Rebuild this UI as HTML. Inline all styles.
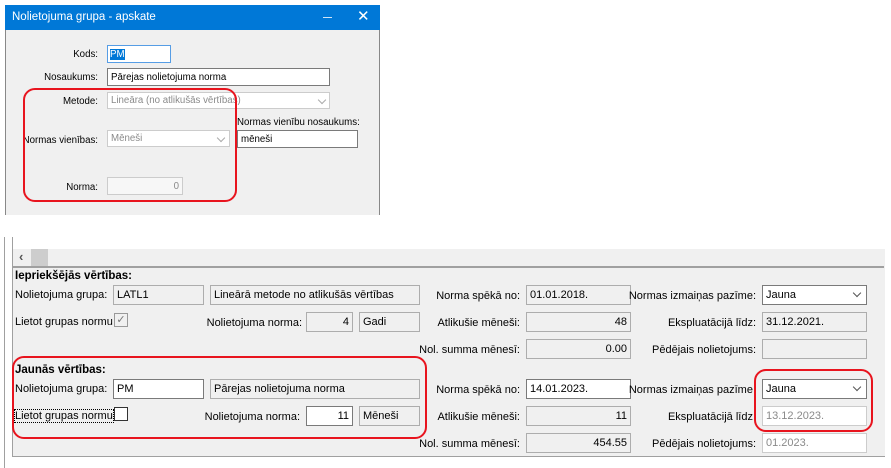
<!DOCTYPE html>
<html><head><meta charset="utf-8"><style>
*{box-sizing:border-box;margin:0;padding:0}
body{width:891px;height:468px;background:#fff;position:relative;overflow:hidden;font-family:"Liberation Sans",sans-serif;font-size:11px;color:#000}
.a{position:absolute;white-space:nowrap}
.lbl{position:absolute;white-space:nowrap;text-align:right;line-height:14px}
.in{position:absolute;background:#fff;border:1px solid #7a7a7a;line-height:19px;padding:0 3px;white-space:nowrap;overflow:hidden}
.ro{background:#f0f0f0;border:1px solid #adadad}
.dis{background:#fff;border:1px solid #ccc;color:#8a8a8a}
.r{text-align:right}
.red{position:absolute;border:2px solid #e8141e;border-radius:12px}
.chev{position:absolute;width:6px;height:6px;border-right:1px solid #555;border-bottom:1px solid #555;transform:rotate(45deg)}
.d{font-size:9.7px}
.d.in{line-height:17px}
</style></head><body>
<!-- dialog -->
<div class="a" style="left:5px;top:5px;width:375px;height:210px;background:#f0f0f0;border-left:1px solid #888;border-right:1px solid #888"></div>
<div class="a" style="left:5px;top:5px;width:375px;height:25px;background:#0078d7;color:#fff;font-size:11.5px;line-height:25px;padding-left:7px">Nolietojuma grupa - apskate</div>
<div class="a" style="left:323px;top:17px;width:9px;height:1px;background:#cfe4f7"></div>
<div class="a" style="left:357px;top:8px;color:#fff;font-size:15px;line-height:18px">✕</div>
<div class="lbl d" style="right:793px;top:48px">Kods:</div>
<div class="in d" style="left:107px;top:45px;width:64px;height:18px;border-color:#569de5;padding-left:2px"><span style="background:#0078d7;color:#fff">PM</span></div>
<div class="lbl d" style="right:793px;top:71px">Nosaukums:</div>
<div class="in d" style="left:107px;top:68px;width:223px;height:18px">Pārejas nolietojuma norma</div>
<div class="lbl d" style="right:793px;top:95px">Metode:</div>
<div class="in dis d" style="left:107px;top:92px;width:223px;height:17px;line-height:16px">Lineāra (no atlikušās vērtības)</div>
<div class="chev" style="left:319px;top:97px;border-color:#aaa"></div>
<div class="a d" style="left:237px;top:117px">Normas vienību nosaukums:</div>
<div class="in d" style="left:237px;top:130px;width:121px;height:18px">mēneši</div>
<div class="lbl d" style="right:793px;top:134px">Normas vienības:</div>
<div class="in dis d" style="left:107px;top:130px;width:123px;height:17px;line-height:16px">Mēneši</div>
<div class="chev" style="left:218px;top:135px;border-color:#aaa"></div>
<div class="lbl d" style="right:793px;top:181px">Norma:</div>
<div class="in dis d r" style="left:107px;top:177px;width:76px;height:18px;background:#f7f7f7">0</div>
<div class="red" style="left:23px;top:88px;width:214px;height:114px"></div>

<!-- bottom panel -->
<div class="a" style="left:4px;top:237px;width:1px;height:231px;background:#a0a0a0"></div>
<div class="a" style="left:12px;top:237px;width:873px;height:220px;background:#f0f0f0;border-left:1px solid #a0a0a0;border-bottom:1px solid #a0a0a0"></div>
<div class="a" style="left:13px;top:237px;width:872px;height:12px;background:#fff"></div>
<div class="a" style="left:13px;top:249px;width:871px;height:17px;background:#f0f0f0"></div>
<div class="a" style="left:19px;top:249px;font-size:13px;font-weight:bold;color:#555">‹</div>
<div class="a" style="left:31px;top:249px;width:17px;height:17px;background:#cdcdcd"></div>
<div class="a" style="left:13px;top:266px;width:871px;height:2px;background:#a0a0a0"></div>

<div class="a" style="left:15px;top:270px;font-weight:bold;font-size:11.5px">Iepriekšējās vērtības:</div>
<div class="a" style="left:15px;top:289px">Nolietojuma grupa:</div>
<div class="in ro" style="left:113px;top:285px;width:91px;height:20px">LATL1</div>
<div class="in ro" style="left:210px;top:285px;width:210px;height:20px">Lineārā metode no atlikušās vērtības</div>
<div class="lbl" style="right:371px;top:289px">Norma spēkā no:</div>
<div class="in ro" style="left:526px;top:285px;width:105px;height:20px">01.01.2018.</div>
<div class="lbl" style="right:135px;top:289px">Normas izmaiņas pazīme:</div>
<div class="in" style="left:762px;top:285px;width:105px;height:20px;border-color:#7a7a7a">Jauna</div>
<div class="chev" style="left:854px;top:290px"></div>

<div class="a" style="left:15px;top:316px">Lietot grupas normu</div>
<div class="a" style="left:114px;top:313px;width:14px;height:14px;border:1px solid #999;background:#f0f0f0;font-size:11px;line-height:12px;text-align:center;color:#777">✓</div>
<div class="lbl" style="right:589px;top:316px">Nolietojuma norma:</div>
<div class="in ro r" style="left:306px;top:312px;width:47px;height:20px">4</div>
<div class="in ro" style="left:359px;top:312px;width:61px;height:20px">Gadi</div>
<div class="lbl" style="right:371px;top:316px">Atlikušie mēneši:</div>
<div class="in ro r" style="left:526px;top:312px;width:105px;height:20px">48</div>
<div class="lbl" style="right:135px;top:316px">Ekspluatācijā līdz:</div>
<div class="in ro" style="left:762px;top:312px;width:105px;height:20px">31.12.2021.</div>

<div class="lbl" style="right:371px;top:343px">Nol. summa mēnesī:</div>
<div class="in ro r" style="left:526px;top:339px;width:105px;height:20px">0.00</div>
<div class="lbl" style="right:135px;top:343px">Pēdējais nolietojums:</div>
<div class="in ro" style="left:762px;top:339px;width:105px;height:20px"></div>

<div class="a" style="left:15px;top:364px;font-weight:bold;font-size:11.5px">Jaunās vērtības:</div>
<div class="a" style="left:15px;top:383px">Nolietojuma grupa:</div>
<div class="in" style="left:113px;top:379px;width:91px;height:20px">PM</div>
<div class="in ro" style="left:210px;top:379px;width:210px;height:20px">Pārejas nolietojuma norma</div>
<div class="lbl" style="right:371px;top:383px">Norma spēkā no:</div>
<div class="in" style="left:526px;top:379px;width:105px;height:20px">14.01.2023.</div>
<div class="lbl" style="right:135px;top:383px">Normas izmaiņas pazīme:</div>
<div class="in" style="left:762px;top:379px;width:105px;height:20px">Jauna</div>
<div class="chev" style="left:854px;top:384px"></div>

<div class="a" style="left:15px;top:410px;outline:1px dotted #000">Lietot grupas normu</div>
<div class="a" style="left:114px;top:407px;width:14px;height:14px;border:1px solid #333;background:#fff"></div>
<div class="lbl" style="right:591px;top:410px">Nolietojuma norma:</div>
<div class="in r" style="left:306px;top:406px;width:47px;height:20px">11</div>
<div class="in ro" style="left:359px;top:406px;width:61px;height:20px">Mēneši</div>
<div class="lbl" style="right:371px;top:410px">Atlikušie mēneši:</div>
<div class="in ro r" style="left:526px;top:406px;width:105px;height:20px">11</div>
<div class="lbl" style="right:135px;top:410px">Ekspluatācijā līdz:</div>
<div class="in dis" style="left:762px;top:406px;width:105px;height:20px">13.12.2023.</div>

<div class="lbl" style="right:371px;top:437px">Nol. summa mēnesī:</div>
<div class="in ro r" style="left:526px;top:433px;width:105px;height:20px">454.55</div>
<div class="lbl" style="right:135px;top:437px">Pēdējais nolietojums:</div>
<div class="in dis" style="left:762px;top:433px;width:105px;height:20px">01.2023.</div>

<div class="red" style="left:12px;top:356px;width:415px;height:83px"></div>
<div class="red" style="left:754px;top:369px;width:119px;height:63px"></div>
</body></html>
